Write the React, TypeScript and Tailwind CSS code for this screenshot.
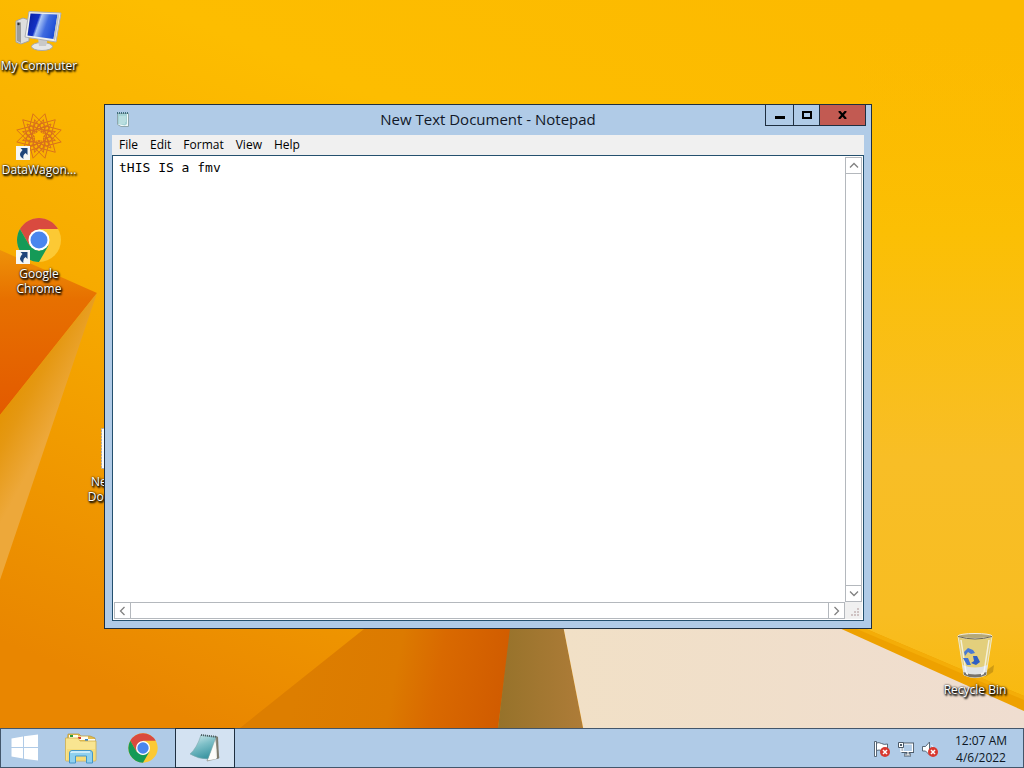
import type { ReactNode } from "react";

const taskbarFont = "font-['Open_Sans','Noto_Sans',sans-serif]";

function Wallpaper() {
  return (
    <svg className="absolute inset-0 h-full w-full" viewBox="0 0 1024 768" preserveAspectRatio="none" aria-hidden="true">
      <defs>
        <linearGradient id="sky" x1="0.85" y1="0" x2="0.3" y2="1">
          <stop offset="0" stopColor="#fcba00" />
          <stop offset="0.3" stopColor="#fdbd00" />
          <stop offset="0.6" stopColor="#f7ab00" />
          <stop offset="1" stopColor="#e98600" />
        </linearGradient>
        <linearGradient id="right" x1="0" y1="0" x2="0" y2="1">
          <stop offset="0" stopColor="#fcba00" stopOpacity="0" />
          <stop offset="0.3" stopColor="#fbbf04" />
          <stop offset="0.6" stopColor="#f8be26" />
          <stop offset="0.8" stopColor="#f8bd22" />
          <stop offset="1" stopColor="#f9b600" />
        </linearGradient>
        <linearGradient id="wedge" x1="0" y1="0" x2="0" y2="1">
          <stop offset="0" stopColor="#ee9208" />
          <stop offset="0.3" stopColor="#e77000" />
          <stop offset="1" stopColor="#e35a00" />
        </linearGradient>
        <linearGradient id="fold" gradientUnits="userSpaceOnUse" x1="0" y1="400" x2="52" y2="428">
          <stop offset="0" stopColor="#e39200" />
          <stop offset="0.4" stopColor="#e59812" />
          <stop offset="1" stopColor="#eda83a" />
        </linearGradient>
        <linearGradient id="dune" gradientUnits="userSpaceOnUse" x1="300" y1="660" x2="510" y2="700">
          <stop offset="0" stopColor="#dd7e00" />
          <stop offset="0.45" stopColor="#dc7a00" />
          <stop offset="0.65" stopColor="#d96900" />
          <stop offset="1" stopColor="#d05a00" />
        </linearGradient>
        <linearGradient id="olive" x1="0" y1="0" x2="1" y2="0">
          <stop offset="0" stopColor="#96722a" />
          <stop offset="1" stopColor="#ae7c38" />
        </linearGradient>
        <linearGradient id="cream" x1="0" y1="0" x2="1" y2="0">
          <stop offset="0" stopColor="#f1e0c6" />
          <stop offset="1" stopColor="#efddd0" />
        </linearGradient>
      </defs>
      <path d="M0 0H1024V768H0Z" fill="url(#sky)" />
      <path d="M860 0H1024V768H860Z" fill="url(#right)" />
      <path d="M0 250L97 293L0 415Z" fill="url(#wedge)" />
      <path d="M97 293L0 415V580Z" fill="url(#fold)" />
      <path d="M364 629L512 600L511 629L498 728H240Z" fill="url(#dune)" />
      <path d="M511 620H562L583 728H498Z" fill="url(#olive)" />
      <path d="M562 620H826L1024 710V768H591Z" fill="url(#cream)" />
      <path d="M826 612L930 656L1024 696V711L930 669L826 622Z" fill="#eea100" />
      <path d="M826 612L930 656L1024 696V700L930 660L826 616Z" fill="#f4ad08" />
    </svg>
  );
}

function ComputerIcon() {
  return (
    <svg width="48" height="48" viewBox="0 0 48 48" aria-hidden="true">
      <defs>
        <linearGradient id="screen" x1="0" y1="0" x2="1" y2="0.3">
          <stop offset="0" stopColor="#0a1f9c" />
          <stop offset="0.38" stopColor="#1230c4" />
          <stop offset="0.46" stopColor="#a9c4f6" />
          <stop offset="0.7" stopColor="#3f6be0" />
          <stop offset="1" stopColor="#1f4fd6" />
        </linearGradient>
      </defs>
      <path d="M1 13L8 10L14 12V33L6 36L1 34Z" fill="#dedede" stroke="#a3a3a3" />
      <path d="M2 13.500L6 14.500V35L2 33Z" fill="#9c9c9a" />
      <circle cx="3.500" cy="16" r="1.200" fill="#333" />
      <ellipse cx="27" cy="38.500" rx="10.500" ry="4" fill="#e6e6e6" stroke="#a9a9a9" />
      <path d="M23 30H33L31 38H24Z" fill="#c9c9c9" />
      <path d="M14 3.500L46 5L41 34L10 29Z" fill="#f0f0ee" stroke="#aeb0b3" />
      <path d="M15.500 5.500L42.500 6.500L38.500 31L12.500 27.500Z" fill="url(#screen)" />
      <path d="M42.500 6.500L44.500 6L40 33L38.500 31Z" fill="#c4c4c0" />
    </svg>
  );
}

const spokes = Array.from({ length: 12 }, (_, i) => i * 30);

function MandalaIcon() {
  return (
    <svg width="48" height="48" viewBox="0 0 48 48" aria-hidden="true">
      <g fill="none" stroke="#d8701c" strokeWidth="0.900">
        {spokes.map((angle) => (
          <path key={angle} d="M24 1L32 15L24 20L16 15ZM24 7L30 21M24 7L18 21M20 18L31 12" transform={`rotate(${angle + 15} 24 24)`} />
        ))}
      </g>
      <path d="M24 18L26 21L30 22L28 25L28 29L24 28L20 29L20 25L18 22L22 21Z" fill="#ffb400" />
    </svg>
  );
}

function ChromeIcon({ size }: { size: number }) {
  return (
    <svg width={size} height={size} viewBox="0 0 48 48" aria-hidden="true">
      <circle cx="24" cy="24" r="22" fill="#fcc934" />
      <path d="M4.950 13A22 22 0 0 1 43.050 13L24 13L14.500 29.500Z" fill="#d94a3f" />
      <path d="M4.950 13A22 22 0 0 0 24 46L33.500 29.500L24 35L14.500 29.500Z" fill="#159a57" />
      <circle cx="24" cy="24" r="10.500" fill="#fff" />
      <circle cx="24" cy="24" r="8.500" fill="#4a86ee" />
    </svg>
  );
}

function DocumentIcon() {
  return (
    <svg width="48" height="48" viewBox="0 0 48 48" aria-hidden="true">
      <path d="M8.500 4.500H32L40 12V44.500H8.500Z" fill="#fbfbfb" stroke="#a8a8a8" strokeDasharray="2 1" />
      <path d="M12 13H34M12 18H36M12 23H36M12 28H36M12 33H36M12 38H36" stroke="#9fb4c8" />
    </svg>
  );
}

function RecycleBinIcon() {
  return (
    <svg width="48" height="48" viewBox="0 0 48 48" aria-hidden="true">
      <path d="M36 38L43 33L42 40L34 45Z" fill="#8f6a10" opacity="0.4" />
      <path d="M7 4L13 43Q24 48 35 43L41 4Z" fill="#e3cf7c" stroke="#efe8cc" />
      <path d="M11.500 33L13 43Q24 48 35 43L36.500 33Q24 38 11.500 33Z" fill="#dfe2e4" />
      <path d="M12.500 40Q24 45 35.500 40L35 43Q24 48 13 43Z" fill="#77746e" />
      <path d="M15 42L17 43V41L15 40ZM30 43.500L33 42V40L30 41Z" fill="#f4f4f2" />
      <path d="M10 8L15 40M38 8L33 40" stroke="#fff" strokeWidth="1.500" opacity="0.7" />
      <ellipse cx="24" cy="4" rx="17" ry="2.500" fill="#b5a878" stroke="#f0eee6" />
      <path d="M7 4.500Q24 9.500 41 4.500" fill="none" stroke="#6c6654" />
      <path d="M13 20L17 16L22 18L24 21L20 22L17 20L14 24Z" fill="#4a7ad2" />
      <path d="M22 24L26 24L29 30L25 33L20 31L23 29Z" fill="#2f5fc4" />
      <path d="M12 26L17 26L20 33L16 33Z" fill="#4272d4" />
    </svg>
  );
}

function ShortcutBadge() {
  return (
    <svg className="absolute bottom-0 left-0" width="15" height="14" viewBox="0 0 15 14" aria-hidden="true">
      <path d="M1 0H15V14H1Z" fill="#f6f6f4" />
      <path d="M5.500 2H12.500V9L10.500 7Q7.500 9 8.500 13Q2 9.500 7.500 4Z" fill="#1f4479" />
    </svg>
  );
}

interface DesktopIconProps {
  lines: string[];
  place: string;
  shortcut?: boolean;
  children: ReactNode;
}

function DesktopIcon({ lines, place, shortcut, children }: DesktopIconProps) {
  return (
    <button type="button" className={`absolute flex w-[78px] flex-col items-center gap-[2px] ${place}`}>
      <span className="relative block size-12">
        {children}
        {shortcut && <ShortcutBadge />}
      </span>
      <span className="text-xs leading-[15px] whitespace-nowrap text-white [text-shadow:1px_1px_2px_#000,1px_2px_2px_#000,0_0_2px_#000]">
        {lines.map((line) => (
          <span key={line} className="block">{line}</span>
        ))}
      </span>
    </button>
  );
}

function NotepadIcon({ size }: { size: number }) {
  return (
    <svg width={size} height={size} viewBox="0 0 32 32" aria-hidden="true">
      <defs>
        <linearGradient id="pad" x1="0" y1="0" x2="0.4" y2="1">
          <stop offset="0" stopColor="#d9eef0" />
          <stop offset="0.5" stopColor="#7fc0c8" />
          <stop offset="1" stopColor="#3f98a4" />
        </linearGradient>
      </defs>
      <path d="M26 4L30 26L18 29Z" fill="#f7f7f3" stroke="#8b8b80" strokeWidth="0.700" />
      <path d="M27 4L29 5L30 26L28 27Z" fill="#7d7a6c" />
      <path d="M12 3L27 5L19 27Q9 27 1 22Q8 16 12 3Z" fill="url(#pad)" stroke="#7fa9ad" strokeWidth="0.600" />
      <path d="M19 28L25 14L27 27Z" fill="#fdfdfb" />
      <path d="M12 3L28 5" stroke="#4b5a5e" strokeWidth="2" strokeDasharray="1 1" />
    </svg>
  );
}

function PadIcon() {
  return (
    <svg width="16" height="16" viewBox="0 0 16 16" aria-hidden="true">
      <path d="M2.500 1.500H13.500V14.500H6L2.500 12.500Z" fill="#f2fafa" stroke="#8fa6ac" />
      <path d="M3 2H12V12L10 13.500L3 12Z" fill="#a5d3d6" />
      <path d="M4 5H11M4 7H11M4 9H11M4 11H10" stroke="#cfe9ea" />
      <path d="M2 1H13" stroke="#3e6f7c" strokeWidth="2" strokeDasharray="1 1" />
    </svg>
  );
}

const menus = ["File", "Edit", "Format", "View", "Help"];

const arrows = {
  up: "M4 9.500L8 5.500L12 9.500",
  down: "M4 5.500L8 9.500L12 5.500",
  left: "M9.500 4L5.500 8L9.500 12",
  right: "M5.500 4L9.500 8L5.500 12",
};

function ScrollButton({ direction }: { direction: keyof typeof arrows }) {
  return (
    <button type="button" aria-label={`Scroll ${direction}`} className="flex size-[17px] shrink-0 items-center justify-center border border-[#b4b8bd] bg-white">
      <svg className="shrink-0" width="15" height="15" viewBox="0 0 15 15" aria-hidden="true">
        <path d={arrows[direction]} fill="none" stroke="#808080" strokeWidth="1.300" />
      </svg>
    </button>
  );
}

function NotepadWindow() {
  return (
    <section className="absolute top-[104px] right-[152px] bottom-[99px] left-[104px] flex flex-col border border-[#1f2f40] bg-[#b0cbe7] px-[7px] pb-[7px]">
      <header className="grid h-[30px] shrink-0 grid-cols-[1fr_auto_1fr]">
        <span className="flex items-center pl-[3px]">
          <PadIcon />
        </span>
        <h1 className="text-[15px] leading-[29px] text-[#101828]">New Text Document - Notepad</h1>
        <div className="-mr-[2px] flex h-[21px] justify-end">
          <button type="button" aria-label="Minimize" className="flex w-[28px] justify-center border-b border-l border-[#1f2f40] pt-[11px]">
            <span className="h-[3px] w-[10px] bg-black" />
          </button>
          <button type="button" aria-label="Maximize" className="flex w-[26px] items-center justify-center border-b border-l border-[#1f2f40]">
            <span className="h-2 w-[10px] border-2 border-black" />
          </button>
          <button type="button" aria-label="Close" className="flex w-[47px] items-center justify-center border-x border-b border-[#1f2f40] bg-[#c25a52]">
            <svg width="9" height="8" viewBox="0 0 9 8" aria-hidden="true">
              <path d="M1 0L8 8M8 0L1 8" stroke="#000" strokeWidth="2.200" />
            </svg>
          </button>
        </div>
      </header>
      <nav className="flex h-[20px] shrink-0 bg-[#f0f0f0] pl-px">
        {menus.map((menu) => (
          <button key={menu} type="button" className="px-[6px] text-xs leading-5 text-black">
            {menu}
          </button>
        ))}
      </nav>
      <div className="grid min-h-0 flex-1 grid-cols-[1fr_17px] grid-rows-[1fr_17px] border border-[#24506e] bg-white p-px">
        <textarea
          aria-label="Document text"
          spellCheck={false}
          defaultValue="tHIS IS a fmv"
          className="resize-none overflow-hidden px-[5px] pt-[3px] font-['DejaVu_Sans_Mono',monospace] text-[13px] leading-4 text-black outline-none"
        />
        <div className="flex flex-col justify-between border-x border-[#b4b8bd] *:-mx-px">
          <ScrollButton direction="up" />
          <ScrollButton direction="down" />
        </div>
        <div className="flex justify-between border-y border-[#b4b8bd] *:-my-px">
          <ScrollButton direction="left" />
          <ScrollButton direction="right" />
        </div>
        <svg className="bg-[#f0f0f0]" width="17" height="17" viewBox="0 0 17 17" aria-hidden="true">
          <path d="M12 6H14V8H12ZM9 9H11V11H9ZM12 9H14V11H12ZM6 12H8V14H6ZM9 12H11V14H9ZM12 12H14V14H12Z" fill="#cfc3c3" />
        </svg>
      </div>
    </section>
  );
}

function WindowsLogo() {
  return (
    <svg width="28" height="28" viewBox="0 0 28 28" aria-hidden="true">
      <path d="M0.500 4.500L12 2.500V13H0.500ZM13 2.300L27 0.500V13H13ZM0.500 14H12V24.500L0.500 22.500ZM13 14H27V26.500L13 24.700Z" fill="#fff" />
    </svg>
  );
}

function ExplorerIcon() {
  return (
    <svg width="34" height="32" viewBox="0 0 34 32" aria-hidden="true">
      <path d="M4 2H15L17 4H26L31 6V12H3Z" fill="#e4bd4e" stroke="#b9973a" strokeWidth="0.700" />
      <path d="M5 3H14V6H5ZM14 4.500H24V8H14ZM21 7H31V9H21Z" fill="#fffdf0" />
      <path d="M6 3H9V5H6Z" fill="#2f9a3a" />
      <path d="M14 5H17V7H14Z" fill="#d43d2f" />
      <path d="M21 7H24V9H21Z" fill="#3584c9" />
      <path d="M1.500 6H14L16 9H32V28Q32 29 31 29H2.500Q1.500 29 1.500 28Z" fill="#f9e591" stroke="#cfae4c" strokeWidth="0.800" />
      <path d="M3 17H31V28H3Z" fill="#f3d66a" opacity="0.6" />
      <path d="M5.500 31V21Q5.500 18.500 8 18.500H26Q28.500 18.500 28.500 21V31H22.500V24H11.500V31Z" fill="#8fd0ef" stroke="#4497c9" />
      <path d="M7 21Q7 20 8 20H26" fill="none" stroke="#dff4fd" strokeWidth="1.500" />
    </svg>
  );
}

function ErrorDot() {
  return (
    <>
      <circle cx="11" cy="11" r="5" fill="#d8382f" />
      <path d="M9 9L13 13M13 9L9 13" stroke="#fff" strokeWidth="1.500" />
    </>
  );
}

function FlagIcon() {
  return (
    <svg width="16" height="16" viewBox="0 0 16 16" aria-hidden="true">
      <path d="M0.500 0.500H2.500V15.500H0.500Z" fill="#fff" stroke="#4b5a6a" strokeWidth="0.900" />
      <path d="M2.500 2Q5 1 7.500 2.500T13.500 3V10Q10 10.500 7.500 9.500T2.500 9.500Z" fill="#fff" stroke="#4b5a6a" strokeWidth="0.900" />
      <ErrorDot />
    </svg>
  );
}

function NetworkIcon() {
  return (
    <svg width="16" height="16" viewBox="0 0 16 16" aria-hidden="true">
      <path d="M5 3H14.500V10.500H5Z" fill="none" stroke="#4b5a6a" strokeWidth="3" />
      <path d="M5 3H14.500V10.500H5Z" fill="#b0cbe7" stroke="#fff" strokeWidth="1.200" />
      <path d="M6 14H13M10 11V14" stroke="#4b5a6a" strokeWidth="3" />
      <path d="M6.500 14H12.500M10 11V14" stroke="#fff" strokeWidth="1.200" />
      <path d="M0.500 1.500H5.500V6.500H0.500Z" fill="#fff" stroke="#4b5a6a" />
      <path d="M2 3H4V5H2Z" fill="#4b5a6a" />
      <path d="M3 7V10.500H5" fill="none" stroke="#fff" strokeWidth="1.200" />
    </svg>
  );
}

function SpeakerIcon() {
  return (
    <svg width="16" height="16" viewBox="0 0 16 16" aria-hidden="true">
      <path d="M0.500 5.500H3.500L7.500 1V14L3.500 10H0.500Z" fill="#fff" stroke="#4b5a6a" strokeWidth="0.900" />
      <path d="M9.500 4Q11 5.500 11 7" fill="none" stroke="#fff" />
      <ErrorDot />
    </svg>
  );
}

const trayItems = [
  { label: "Action Center", icon: FlagIcon },
  { label: "Network", icon: NetworkIcon },
  { label: "Volume", icon: SpeakerIcon },
];

function Taskbar() {
  return (
    <footer className="relative flex h-10 shrink-0 border border-[#43566b] bg-[#b0cbe7]">
      <div className="flex flex-1 gap-[2px]">
        <button type="button" aria-label="Start" className="flex w-12 items-center justify-center">
          <WindowsLogo />
        </button>
        <button type="button" aria-label="File Explorer" className="flex w-[60px] items-center justify-center">
          <ExplorerIcon />
        </button>
        <button type="button" aria-label="Google Chrome" className="flex w-[60px] items-center justify-center">
          <ChromeIcon size={32} />
        </button>
        <button type="button" aria-label="Notepad" className="-my-px flex w-[60px] items-center justify-center border border-[#1f2f40] bg-[#d3e2f2]">
          <NotepadIcon size={32} />
        </button>
      </div>
      <div className="flex items-center gap-2 pt-[2px]">
        {trayItems.map((item) => {
          const Icon = item.icon;
          return (
            <button key={item.label} type="button" aria-label={item.label}>
              <Icon />
            </button>
          );
        })}
      </div>
      <button type="button" className="ml-3 w-[62px] pt-[2px] text-center text-xs leading-[17px] text-[#0c1622]">
        <span className="block">12:07 AM</span>
        <span className="block">4/6/2022</span>
      </button>
      <button type="button" aria-label="Show desktop" className="w-[11px]" />
    </footer>
  );
}

export default function App() {
  return (
    <div className={`relative flex min-h-screen flex-col overflow-hidden bg-[#fcba00] ${taskbarFont}`}>
      <Wallpaper />
      <main className="relative flex-1">
        <DesktopIcon lines={["My Computer"]} place="top-2 left-0">
          <ComputerIcon />
        </DesktopIcon>
        <DesktopIcon lines={["DataWagon..."]} place="top-28 left-0" shortcut>
          <MandalaIcon />
        </DesktopIcon>
        <DesktopIcon lines={["Google", "Chrome"]} place="top-54 left-0" shortcut>
          <ChromeIcon size={48} />
        </DesktopIcon>
        <DesktopIcon lines={["New Text", "Document"]} place="top-106 left-[78px]">
          <DocumentIcon />
        </DesktopIcon>
        <DesktopIcon lines={["Recycle Bin"]} place="right-[10px] bottom-[31px]">
          <RecycleBinIcon />
        </DesktopIcon>
        <NotepadWindow />
      </main>
      <Taskbar />
    </div>
  );
}
